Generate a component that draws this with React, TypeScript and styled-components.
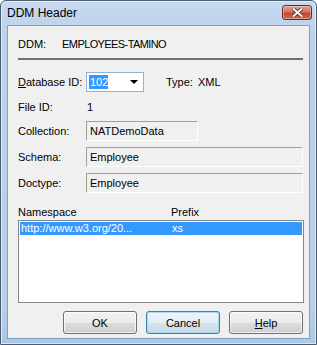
import styled, { createGlobalStyle } from 'styled-components';

const GlobalStyle = createGlobalStyle`
	html, body {
		margin: 0;
		padding: 0;
		background: #ffffff;
	}
	body {
		font-family: "Liberation Sans", Arial, sans-serif;
		font-size: 11px;
		color: #000000;
	}
`;

const namespaces = [
	{ uri: 'http://www.w3.org/20...', prefix: 'xs', selected: true },
];

const App = () => {
	return (
		<>
			<GlobalStyle />
			<Window>
				<TitleBar>
					<Title>DDM Header</Title>
					<CloseButton aria-label="Close">
						<svg width="11" height="9" viewBox="0 0 11 9">
							<path d="M1.5 1 L9.5 8 M9.5 1 L1.5 8" stroke="#5a1a12" strokeWidth="3.4" strokeLinecap="square" />
							<path d="M1.5 1 L9.5 8 M9.5 1 L1.5 8" stroke="#ffffff" strokeWidth="2" strokeLinecap="square" />
						</svg>
					</CloseButton>
				</TitleBar>
				<Client>
					<HeaderRow>
						<span>DDM:</span>
						<HeaderValue>EMPLOYEES-TAMINO</HeaderValue>
					</HeaderRow>
					<Separator />

					<FormRow $top={12}>
						<Label><u>D</u>atabase ID:</Label>
						<Combo>
							<Selected>102</Selected>
							<Arrow />
						</Combo>
						<TypeText>Type:</TypeText>
						<span>XML</span>
					</FormRow>

					<FormRow $top={8} $height={13}>
						<Label>File ID:</Label>
						<PlainValue>1</PlainValue>
					</FormRow>

					<FormRow $top={8}>
						<Label>Collection:</Label>
						<ReadOnlyField $width={112}>NATDemoData</ReadOnlyField>
					</FormRow>

					<FormRow $top={6}>
						<Label>Schema:</Label>
						<ReadOnlyField>Employee</ReadOnlyField>
					</FormRow>

					<FormRow $top={6}>
						<Label>Doctype:</Label>
						<ReadOnlyField>Employee</ReadOnlyField>
					</FormRow>

					<ListHeader>
						<span>Namespace</span>
						<span>Prefix</span>
					</ListHeader>
					<ListBox>
						{namespaces.map(ns => (
							<ListRow key={ns.uri} $selected={ns.selected}>
								<span>{ns.uri}</span>
								<span>{ns.prefix}</span>
							</ListRow>
						))}
					</ListBox>

					<ButtonRow>
						<DialogButton>OK</DialogButton>
						<DialogButton $focused>Cancel</DialogButton>
						<DialogButton><u>H</u>elp</DialogButton>
					</ButtonRow>
				</Client>
			</Window>
		</>
	);
};

export default App;

const Window = styled.div`
	width: 317px;
	height: 345px;
	box-sizing: border-box;
	border: 1px solid #4d5d70;
	border-radius: 6px 6px 0 0;
	background: linear-gradient(to bottom, #c8daef 0px, #bcd2ec 30px, #b9d0ea 300px, #a9c8e6 345px);
	box-shadow: inset 0 0 0 1px rgba(255, 255, 255, 0.55);
	display: flex;
	flex-direction: column;
	overflow: hidden;
`;

const TitleBar = styled.div`
	height: 24px;
	display: flex;
	align-items: flex-start;
	justify-content: space-between;
	padding-left: 6px;
	padding-right: 4px;
	flex-shrink: 0;
`;

const Title = styled.div`
	font-family: "Liberation Sans", Arial, sans-serif;
	font-size: 12px;
	line-height: 24px;
	color: #000000;
`;

const CloseButton = styled.div`
	margin-top: 4px;
	width: 30px;
	height: 15px;
	box-sizing: border-box;
	border: 1px solid #6b2a22;
	border-radius: 3px;
	background: linear-gradient(to bottom, #e5a090 0%, #d3725f 45%, #c24a35 55%, #cf6a50 100%);
	box-shadow: inset 0 0 0 1px rgba(255, 255, 255, 0.35);
	display: flex;
	align-items: center;
	justify-content: center;
`;

const Client = styled.div`
	margin: 0 6px 5px 6px;
	flex: 1;
	box-sizing: border-box;
	background: #f0f0f0;
	border: 1px solid #869ebb;
	padding: 0 6px 0 10px;
	display: flex;
	flex-direction: column;
`;

const HeaderRow = styled.div`
	margin-top: 12px;
	height: 13px;
	line-height: 13px;
	display: flex;
`;

const HeaderValue = styled.span`
	margin-left: 16px;
	letter-spacing: -0.6px;
`;

const Separator = styled.div`
	margin-top: 7px;
	height: 2px;
	width: 285px;
	background: #707070;
`;

const FormRow = styled.div<{ $top: number; $height?: number }>`
	margin-top: ${p => p.$top}px;
	height: ${p => p.$height ?? 20}px;
	display: flex;
	align-items: center;
`;

const Label = styled.div`
	width: 68px;
	flex-shrink: 0;
`;

const PlainValue = styled.span`
	padding-left: 1px;
`;

const Combo = styled.div`
	width: 58px;
	height: 20px;
	box-sizing: border-box;
	border: 1px solid #8fb3dc;
	background: #ffffff;
	position: relative;
	display: flex;
	align-items: center;
	padding-left: 2px;
`;

const Selected = styled.span`
	background: #3399ff;
	color: #ffffff;
	height: 14px;
	line-height: 14px;
	padding: 0 1px;
	width: 17px;
`;

const Arrow = styled.span`
	position: absolute;
	right: 5px;
	top: 7px;
	width: 0;
	height: 0;
	border-left: 4px solid transparent;
	border-right: 4px solid transparent;
	border-top: 4px solid #000000;
`;

const TypeText = styled.span`
	margin-left: 22px;
	width: 32px;
`;

const ReadOnlyField = styled.div<{ $width?: number }>`
	width: ${p => (p.$width ? `${p.$width}px` : 'auto')};
	flex: ${p => (p.$width ? '0 0 auto' : '1')};
	height: 20px;
	box-sizing: border-box;
	border-top: 1px solid #a0a0a0;
	border-left: 1px solid #a0a0a0;
	border-bottom: 1px solid #ffffff;
	border-right: 1px solid #ffffff;
	padding-left: 3px;
	line-height: 18px;
	white-space: nowrap;
`;

const ListHeader = styled.div`
	margin-top: 13px;
	height: 13px;
	line-height: 13px;
	display: grid;
	grid-template-columns: 153px 1fr;
`;

const ListBox = styled.div`
	margin-top: 1px;
	height: 83px;
	width: 286px;
	box-sizing: border-box;
	border: 1px solid #828790;
	background: #ffffff;
	padding: 1px 1px;
`;

const ListRow = styled.div<{ $selected?: boolean }>`
	height: 13px;
	line-height: 13px;
	display: grid;
	grid-template-columns: 151px 1fr;
	padding-left: 1px;
	background: ${p => (p.$selected ? '#3399ff' : 'transparent')};
	color: ${p => (p.$selected ? '#ffffff' : '#000000')};
`;

const ButtonRow = styled.div`
	margin-top: 8px;
	display: flex;
	justify-content: flex-end;
	gap: 9px;
	width: 285px;
`;

const DialogButton = styled.button<{ $focused?: boolean }>`
	width: 74px;
	height: 23px;
	box-sizing: border-box;
	font-family: "Liberation Sans", Arial, sans-serif;
	font-size: 11px;
	color: #000000;
	padding: 0;
	border-radius: 3px;
	border: 1px solid ${p => (p.$focused ? '#3c7fb1' : '#707070')};
	background: ${p =>
		p.$focused
			? 'linear-gradient(to bottom, #eef5fa 0%, #e4eef6 50%, #d5e3ee 51%, #c8d9e6 100%)'
			: 'linear-gradient(to bottom, #f2f2f2 0%, #ebebeb 50%, #dddddd 51%, #cfcfcf 100%)'};
	box-shadow: inset 0 0 0 1px ${p => (p.$focused ? 'rgba(160, 215, 245, 0.9)' : 'rgba(255, 255, 255, 0.7)')};
`;
